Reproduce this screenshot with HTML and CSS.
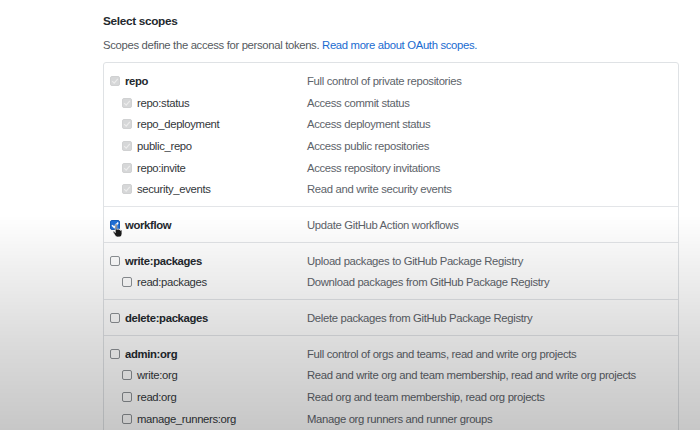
FILE: index.html
```html
<!DOCTYPE html>
<html>
<head>
<meta charset="utf-8">
<link rel="stylesheet" href="styles.css">
</head>
<body>
<div class="page">
  <h3 class="title">Select scopes</h3>
  <p class="intro">Scopes define the access for personal tokens. <a class="link" href="#">Read more about OAuth scopes.</a></p>
  <div class="scopes">
    <div class="group">
      <div class="row parent"><span class="cb disabled"><svg viewBox="0 0 10 10" width="10" height="10"><path d="M2.2 5.2 L4.2 7.2 L7.8 2.8" fill="none" stroke="#ececec" stroke-width="1.2"/></svg></span><span class="name">repo</span><span class="desc">Full control of private repositories</span></div>
      <div class="row child"><span class="cb disabled"><svg viewBox="0 0 10 10" width="10" height="10"><path d="M2.2 5.2 L4.2 7.2 L7.8 2.8" fill="none" stroke="#ececec" stroke-width="1.2"/></svg></span><span class="name">repo:status</span><span class="desc">Access commit status</span></div>
      <div class="row child"><span class="cb disabled"><svg viewBox="0 0 10 10" width="10" height="10"><path d="M2.2 5.2 L4.2 7.2 L7.8 2.8" fill="none" stroke="#ececec" stroke-width="1.2"/></svg></span><span class="name">repo_deployment</span><span class="desc">Access deployment status</span></div>
      <div class="row child"><span class="cb disabled"><svg viewBox="0 0 10 10" width="10" height="10"><path d="M2.2 5.2 L4.2 7.2 L7.8 2.8" fill="none" stroke="#ececec" stroke-width="1.2"/></svg></span><span class="name">public_repo</span><span class="desc">Access public repositories</span></div>
      <div class="row child"><span class="cb disabled"><svg viewBox="0 0 10 10" width="10" height="10"><path d="M2.2 5.2 L4.2 7.2 L7.8 2.8" fill="none" stroke="#ececec" stroke-width="1.2"/></svg></span><span class="name">repo:invite</span><span class="desc">Access repository invitations</span></div>
      <div class="row child"><span class="cb disabled"><svg viewBox="0 0 10 10" width="10" height="10"><path d="M2.2 5.2 L4.2 7.2 L7.8 2.8" fill="none" stroke="#ececec" stroke-width="1.2"/></svg></span><span class="name">security_events</span><span class="desc">Read and write security events</span></div>
    </div>
    <div class="group">
      <div class="row parent"><span class="cb checked"><svg viewBox="0 0 10 10" width="10" height="10"><path d="M2 5.2 L4.2 7.4 L8.2 2.6" fill="none" stroke="#fff" stroke-width="1.6"/></svg></span><span class="name">workflow</span><span class="desc">Update GitHub Action workflows</span>
        <svg class="cursor" viewBox="0 0 12 14" width="13" height="15"><path d="M3 1.5 C3 0.7 4.4 0.7 4.4 1.5 L4.4 6 L5 6 C5 5.2 6.4 5.2 6.4 6 L6.4 6.5 C6.4 5.8 7.8 5.8 7.8 6.5 L7.8 7 C7.8 6.3 9.2 6.3 9.2 7 L9.2 10 C9.2 11.8 8.2 13 6.6 13 L5 13 C3.8 13 3.2 12.2 2.6 11.2 L1 8.6 C0.6 7.9 1.5 7.2 2.1 7.9 L3 9 Z" fill="#1b1b1b" stroke="#fff" stroke-width="0.6"/></svg>
      </div>
    </div>
    <div class="group">
      <div class="row parent"><span class="cb"></span><span class="name">write:packages</span><span class="desc">Upload packages to GitHub Package Registry</span></div>
      <div class="row child"><span class="cb"></span><span class="name">read:packages</span><span class="desc">Download packages from GitHub Package Registry</span></div>
    </div>
    <div class="group">
      <div class="row parent"><span class="cb"></span><span class="name">delete:packages</span><span class="desc">Delete packages from GitHub Package Registry</span></div>
    </div>
    <div class="group">
      <div class="row parent"><span class="cb"></span><span class="name">admin:org</span><span class="desc">Full control of orgs and teams, read and write org projects</span></div>
      <div class="row child"><span class="cb"></span><span class="name">write:org</span><span class="desc">Read and write org and team membership, read and write org projects</span></div>
      <div class="row child"><span class="cb"></span><span class="name">read:org</span><span class="desc">Read org and team membership, read org projects</span></div>
      <div class="row child"><span class="cb"></span><span class="name">manage_runners:org</span><span class="desc">Manage org runners and runner groups</span></div>
    </div>
  </div>
</div>
<div class="vignette"></div>
</body>
</html>
```
FILE: styles.css
```css
html, body {
  margin: 0;
  padding: 0;
  background: #fff;
  overflow: hidden;
}
body {
  width: 700px;
  height: 430px;
  font-family: "Liberation Sans", Arial, sans-serif;
  color: #24292e;
  letter-spacing: -0.33px;
}
.page {
  padding: 13px 0 0 103px;
  width: 576px;
}
.title {
  margin: 0;
  font-size: 11.8px;
  font-weight: bold;
  line-height: 16px;
}
.intro {
  margin: 8px 0 0;
  font-size: 11.3px;
  line-height: 16px;
  color: #555a60;
}
.link {
  color: #1a6bd0;
  text-decoration: none;
}
.scopes {
  margin-top: 9px;
  border: 1px solid #dfe2e5;
  border-radius: 3px;
}
.group {
  padding: 7px 0 6px;
  border-top: 1px solid #e3e5e8;
}
.group:first-child {
  border-top: none;
}
.row {
  position: relative;
  display: grid;
  align-items: center;
  height: 21.7px;
  font-size: 11.3px;
  white-space: nowrap;
}
.row.parent {
  grid-template-columns: 15px 182px 1fr;
  padding-left: 6px;
}
.row.child {
  grid-template-columns: 15px 170px 1fr;
  padding-left: 18px;
}
.name {
  color: #33373b;
}
.parent .name {
  font-weight: bold;
  color: #24292e;
}
.desc {
  color: #5d636a;
}
.cb {
  width: 8px;
  height: 8px;
  border: 1px solid #8e9296;
  border-radius: 2px;
  background: #fff;
  display: block;
  position: relative;
}
.cb.disabled {
  background: #d6d7d8;
  border-color: #d0d1d2;
}
.cb.checked {
  background: #1f6fd6;
  border-color: #1a5fb8;
}
.cb svg {
  position: absolute;
  left: -1px;
  top: -1px;
}
.cursor {
  position: absolute;
  left: 8px;
  top: 9px;
}
.vignette {
  position: fixed;
  left: 0;
  top: 0;
  width: 700px;
  height: 430px;
  pointer-events: none;
  background: linear-gradient(to bottom, rgba(0,0,0,0) 0%, rgba(0,0,0,0) 50%, rgba(0,0,0,0.06) 62%, rgba(0,0,0,0.14) 80%, rgba(0,0,0,0.22) 100%);
}
```
